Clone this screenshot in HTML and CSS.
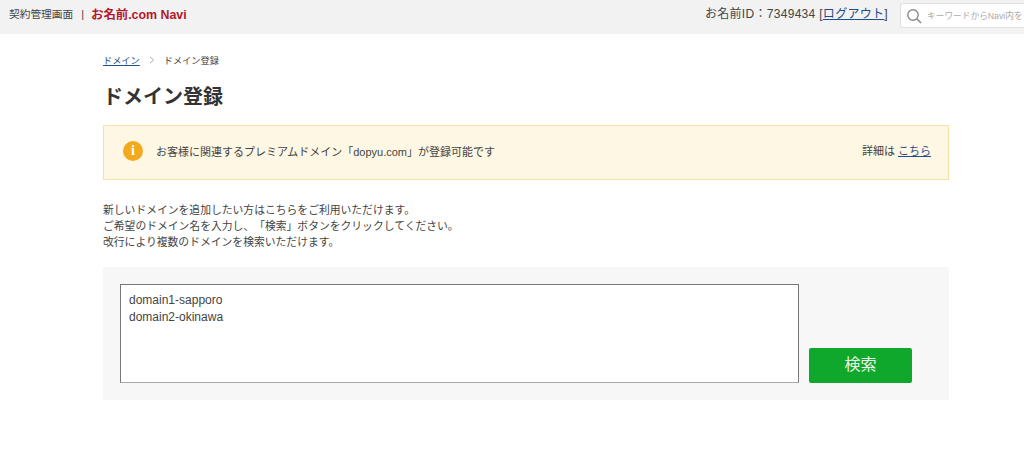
FILE: index.html
```html
<!DOCTYPE html>
<html lang="ja">
<head>
<meta charset="utf-8">
<title>ドメイン登録</title>
<link rel="stylesheet" href="styles.css">
</head>
<body>
<header class="topbar">
  <div class="brand">
    <span class="brand-label">契約管理画面</span>
    <span class="brand-sep">|</span>
    <span class="brand-name">お名前.com Navi</span>
  </div>
  <div class="account">
    <span class="account-id">お名前ID：7349434 [<a href="#" class="link">ログアウト</a>]</span>
    <div class="search">
      <svg class="search-icon" viewBox="0 0 16 16" width="16" height="16" aria-hidden="true"><circle cx="7" cy="7" r="5.2" fill="none" stroke="#8a8a8a" stroke-width="1.4"/><path d="M10.8 10.8L15 15" stroke="#8a8a8a" stroke-width="1.6" fill="none"/></svg>
      <span class="search-text">キーワードからNavi内を</span>
    </div>
  </div>
</header>
<main class="content">
  <nav class="crumbs">
    <a href="#" class="link">ドメイン</a>
    <svg class="crumb-arrow" viewBox="0 0 6 8" width="6" height="8" aria-hidden="true"><path d="M1 .8L4.6 4 1 7.2" fill="none" stroke="#aaa" stroke-width="1"/></svg>
    <span>ドメイン登録</span>
  </nav>
  <h1 class="title">ドメイン登録</h1>
  <section class="notice">
    <div class="notice-main">
      <span class="notice-icon">i</span>
      <span>お客様に関連するプレミアムドメイン「dopyu.com」が登録可能です</span>
    </div>
    <div class="notice-more">詳細は <a href="#" class="link">こちら</a></div>
  </section>
  <p class="intro">新しいドメインを追加したい方はこちらをご利用いただけます。<br>ご希望のドメイン名を入力し、「検索」ボタンをクリックしてください。<br>改行により複数のドメインを検索いただけます。</p>
  <section class="panel">
    <textarea class="domains" rows="5">domain1-sapporo
domain2-okinawa</textarea>
    <button class="submit" type="button">検索</button>
  </section>
</main>
</body>
</html>
```
FILE: styles.css
```css
* { box-sizing: border-box; }
html, body { margin: 0; height: 467px; overflow: hidden; }
body {
  background: #fff;
  color: #444;
  font-family: "Liberation Sans", "Noto Sans CJK JP", sans-serif;
  font-size: 11px;
  text-spacing-trim: space-all;
}
.link { color: #1f4e8c; text-decoration: underline; }
.topbar {
  height: 34px;
  background: #f2f2f2;
  display: flex;
  justify-content: space-between;
  align-items: flex-start;
  padding: 0 0 0 9px;
  overflow: hidden;
}
.brand {
  display: flex;
  align-items: center;
  height: 27px;
  white-space: nowrap;
}
.brand-label { font-size: 10.7px; }
.brand-sep { margin: 0 7px 0 8px; }
.brand-name { color: #b2182b; font-weight: 700; font-size: 12.4px; }
.account { display: flex; align-items: flex-start; gap: 12px; }
.account-id { font-size: 12px; line-height: 28px; white-space: nowrap; letter-spacing: .3px; }
.search {
  width: 124px;
  height: 25px;
  margin-top: 3px;
  background: #fff;
  border: 1px solid #e0e0e0;
  border-right: 0;
  border-radius: 3px 0 0 3px;
  display: flex;
  align-items: center;
  padding-left: 5px;
  gap: 5px;
  white-space: nowrap;
}
.search-icon { flex: none; }
.search-text { color: #aaa; font-size: 8.7px; }
.content { width: 846px; margin-left: 103px; }
.crumbs {
  display: flex;
  align-items: center;
  height: 16px;
  margin-top: 18px;
  font-size: 9.2px;
  gap: 9px;
}
.title {
  margin: 15px 0 0;
  font-size: 20px;
  line-height: 28px;
  font-weight: 700;
  color: #333;
}
.notice {
  margin-top: 14px;
  height: 55px;
  background: #fdf7e3;
  border: 1px solid #f3e3ab;
  display: flex;
  justify-content: space-between;
  align-items: center;
  padding: 0 17px 3px 19px;
}
.notice-main { display: flex; align-items: center; gap: 13px; font-size: 11px; }
.notice-icon {
  width: 20px;
  height: 20px;
  border-radius: 50%;
  background: #f3a91f;
  color: #fff;
  font-family: "Liberation Serif", serif;
  font-weight: 700;
  font-size: 14px;
  line-height: 20px;
  text-align: center;
}
.notice-more { font-size: 11px; margin-top: -2px; }
.intro {
  margin: 22px 0 0;
  font-size: 10.8px;
  line-height: 16px;
}
.panel {
  margin-top: 17px;
  height: 133px;
  background: #f7f7f7;
  display: flex;
  align-items: flex-end;
  gap: 10px;
  padding: 17px;
}
.domains {
  width: 679px;
  height: 99px;
  margin: 0;
  padding: 7px 8px;
  border: 1px solid #777;
  border-bottom-color: #aaa;
  border-radius: 0;
  resize: none;
  outline: none;
  background: #fff;
  color: #444;
  font-family: "Liberation Sans", "Noto Sans CJK JP", sans-serif;
  font-size: 12px;
  line-height: 17px;
}
.submit {
  width: 103px;
  height: 35px;
  padding: 0 0 5px;
  border: 0;
  border-radius: 2px;
  background: #0fa82d;
  color: #e8f7e8;
  font-family: "Liberation Sans", "Noto Sans CJK JP", sans-serif;
  font-size: 16px;
}
```
